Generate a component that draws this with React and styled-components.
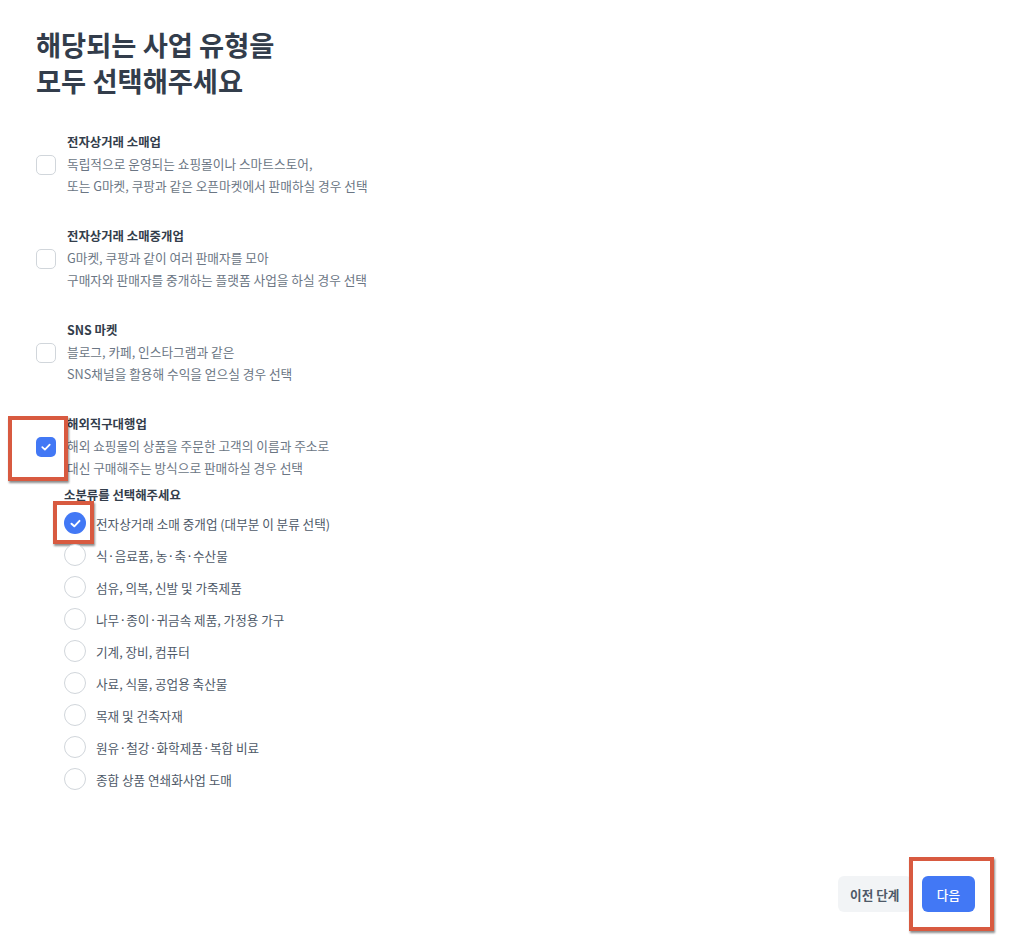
import React from "react";
import styled, { createGlobalStyle } from "styled-components";

const Global = createGlobalStyle`
  html, body { margin: 0; padding: 0; background: #ffffff; }
  body { font-family: "Noto Sans CJK KR", "Noto Sans", sans-serif; -webkit-font-smoothing: antialiased; }
  * { box-sizing: border-box; }
`;

const BLUE = "#4278f5";

const Page = styled.div`
  min-height: 950px;
  padding: 26px 49px 38px 36px;
  display: flex;
  flex-direction: column;
`;

const Title = styled.h1`
  margin: 0;
  font-size: 27.3px;
  line-height: 36px;
  font-weight: 700;
  color: #333d4b;
`;

const List = styled.div`
  margin-top: 34px;
  display: flex;
  flex-direction: column;
  gap: 29px;
`;

const Item = styled.div`
  display: flex;
  flex-direction: column;
`;

const Row = styled.label`
  display: flex;
  align-items: center;
  gap: 11px;
  cursor: pointer;
`;

const BoxWrap = styled.span`
  position: relative;
  display: inline-flex;
  flex-shrink: 0;
`;

const Box = styled.span`
  width: 20px;
  height: 20px;
  border-radius: 5px;
  display: inline-flex;
  align-items: center;
  justify-content: center;
  border: ${(p) => (p.$checked ? "none" : "1.5px solid #d1d6db")};
  background: ${(p) => (p.$checked ? BLUE : "#fff")};
`;

const Texts = styled.div`
  display: flex;
  flex-direction: column;
`;

const ItemTitle = styled.div`
  font-size: 12.4px;
  line-height: 21px;
  font-weight: 700;
  color: #333d4b;
`;

const Desc = styled.div`
  font-size: 12.7px;
  line-height: 22px;
  color: #6b7684;
  white-space: pre-line;
`;

const Sub = styled.div`
  margin: 6px 0 0 28px;
  display: flex;
  flex-direction: column;
`;

const SubTitle = styled.div`
  font-size: 12.4px;
  line-height: 21px;
  font-weight: 700;
  color: #333d4b;
  margin-bottom: 1px;
`;

const RadioRow = styled.label`
  height: 32px;
  display: flex;
  align-items: center;
  gap: 10px;
  font-size: 12.6px;
  color: #4e5968;
  cursor: pointer;
`;

const Radio = styled.span`
  width: 22px;
  height: 22px;
  border-radius: 50%;
  display: inline-flex;
  align-items: center;
  justify-content: center;
  border: ${(p) => (p.$checked ? "none" : "1.5px solid #d1d6db")};
  background: ${(p) => (p.$checked ? BLUE : "#fff")};
`;

const Footer = styled.div`
  margin-top: auto;
  display: flex;
  justify-content: flex-end;
  gap: 10px;
`;

const Button = styled.button`
  position: relative;
  height: 36px;
  padding: 0 ${(p) => (p.$primary ? "15px" : "12.5px")};
  border: none;
  border-radius: 6px;
  font-family: inherit;
  font-size: 12.6px;
  font-weight: ${(p) => (p.$primary ? 500 : 700)};
  background: ${(p) => (p.$primary ? BLUE : "#f2f4f6")};
  color: ${(p) => (p.$primary ? "#ffffff" : "#4e5968")};
  cursor: pointer;
`;

const Highlight = styled.span`
  position: absolute;
  top: ${(p) => -p.$t}px;
  left: ${(p) => -p.$l}px;
  right: ${(p) => -p.$r}px;
  bottom: ${(p) => -p.$b}px;
  border: 4px solid #d85a40;
  box-shadow: 1px 2px 2px rgba(0, 0, 0, 0.45);
  pointer-events: none;
`;

const Check = ({ size = 12 }) => (
  <svg width={size} height={size} viewBox="0 0 12 12" fill="none">
    <path d="M2.3 6.2 L4.9 8.6 L9.7 3.6" stroke="#fff" strokeWidth="1.8" strokeLinecap="round" strokeLinejoin="round" />
  </svg>
);

const items = [
  { title: "전자상거래 소매업", desc: "독립적으로 운영되는 쇼핑몰이나 스마트스토어,\n또는 G마켓, 쿠팡과 같은 오픈마켓에서 판매하실 경우 선택" },
  { title: "전자상거래 소매중개업", desc: "G마켓, 쿠팡과 같이 여러 판매자를 모아\n구매자와 판매자를 중개하는 플랫폼 사업을 하실 경우 선택" },
  { title: "SNS 마켓", desc: "블로그, 카페, 인스타그램과 같은\nSNS채널을 활용해 수익을 얻으실 경우 선택" },
  { title: "해외직구대행업", desc: "해외 쇼핑몰의 상품을 주문한 고객의 이름과 주소로\n대신 구매해주는 방식으로 판매하실 경우 선택", checked: true },
];

const subs = [
  "전자상거래 소매 중개업 (대부분 이 분류 선택)",
  "식·음료품, 농·축·수산물",
  "섬유, 의복, 신발 및 가죽제품",
  "나무·종이·귀금속 제품, 가정용 가구",
  "기계, 장비, 컴퓨터",
  "사료, 식물, 공업용 축산물",
  "목재 및 건축자재",
  "원유·철강·화학제품·복합 비료",
  "종합 상품 연쇄화사업 도매",
];

export default function App() {
  return (
    <>
      <Global />
      <Page>
        <Title>
          해당되는 사업 유형을
          <br />
          모두 선택해주세요
        </Title>
        <List>
          {items.map((it) => (
            <Item key={it.title}>
              <Row>
                <BoxWrap>
                  <Box $checked={it.checked}>{it.checked && <Check />}</Box>
                  {it.checked && <Highlight $t={21} $l={28} $r={12} $b={24} />}
                </BoxWrap>
                <Texts>
                  <ItemTitle>{it.title}</ItemTitle>
                  <Desc>{it.desc}</Desc>
                </Texts>
              </Row>
              {it.checked && (
                <Sub>
                  <SubTitle>소분류를 선택해주세요</SubTitle>
                  {subs.map((s, i) => (
                    <RadioRow key={s}>
                      <BoxWrap>
                        <Radio $checked={i === 0}>{i === 0 && <Check size={13} />}</Radio>
                        {i === 0 && <Highlight $t={11} $l={11} $r={8} $b={10} />}
                      </BoxWrap>
                      {s}
                    </RadioRow>
                  ))}
                </Sub>
              )}
            </Item>
          ))}
        </List>
        <Footer>
          <Button>이전 단계</Button>
          <Button $primary>
            다음
            <Highlight $t={19} $l={13} $r={19} $b={19} />
          </Button>
        </Footer>
      </Page>
    </>
  );
}
